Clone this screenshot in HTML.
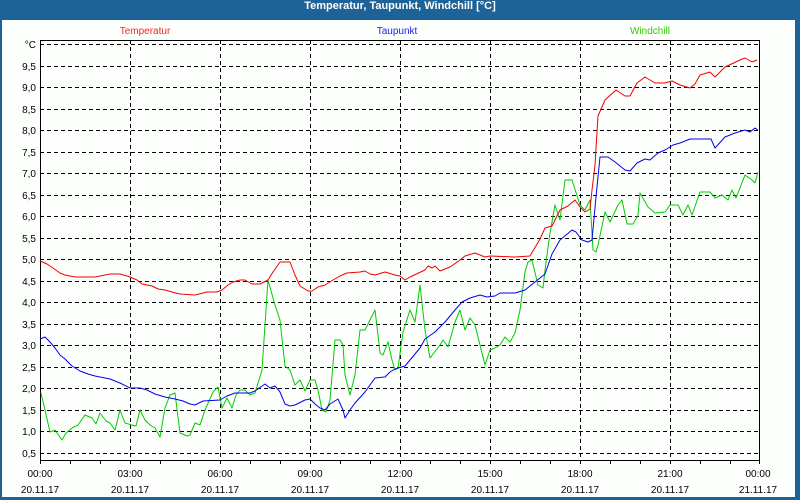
<!DOCTYPE html>
<html><head><meta charset="utf-8"><style>
html,body{margin:0;padding:0;width:800px;height:500px;overflow:hidden;background:#1e6397;}
#w{position:absolute;left:2px;top:20px;width:793px;height:477px;background:#fdfffd;}
#t{position:absolute;left:0;top:0;width:800px;height:20px;line-height:19px;text-align:center;color:#fff;font:bold 11px "Liberation Sans",sans-serif;}
svg{position:absolute;left:0;top:0}
text{font-family:"Liberation Sans",sans-serif;font-size:10px;fill:#000}
</style></head><body>
<div id="t">Temperatur, Taupunkt, Windchill [°C]</div>
<div id="w"></div>
<svg width="800" height="500" viewBox="0 0 800 500">
<g stroke="#000" stroke-width="1" stroke-dasharray="4,3" shape-rendering="crispEdges">
<line x1="40" x2="760" y1="44.5" y2="44.5"/><line x1="40" x2="760" y1="66.5" y2="66.5"/><line x1="40" x2="760" y1="87.5" y2="87.5"/><line x1="40" x2="760" y1="109.5" y2="109.5"/><line x1="40" x2="760" y1="130.5" y2="130.5"/><line x1="40" x2="760" y1="152.5" y2="152.5"/><line x1="40" x2="760" y1="173.5" y2="173.5"/><line x1="40" x2="760" y1="195.5" y2="195.5"/><line x1="40" x2="760" y1="216.5" y2="216.5"/><line x1="40" x2="760" y1="238.5" y2="238.5"/><line x1="40" x2="760" y1="259.5" y2="259.5"/><line x1="40" x2="760" y1="281.5" y2="281.5"/><line x1="40" x2="760" y1="302.5" y2="302.5"/><line x1="40" x2="760" y1="324.5" y2="324.5"/><line x1="40" x2="760" y1="345.5" y2="345.5"/><line x1="40" x2="760" y1="367.5" y2="367.5"/><line x1="40" x2="760" y1="388.5" y2="388.5"/><line x1="40" x2="760" y1="410.5" y2="410.5"/><line x1="40" x2="760" y1="431.5" y2="431.5"/><line x1="40" x2="760" y1="453.5" y2="453.5"/>
<line x1="130.5" x2="130.5" y1="40" y2="460"/><line x1="220.5" x2="220.5" y1="40" y2="460"/><line x1="310.5" x2="310.5" y1="40" y2="460"/><line x1="400.5" x2="400.5" y1="40" y2="460"/><line x1="490.5" x2="490.5" y1="40" y2="460"/><line x1="580.5" x2="580.5" y1="40" y2="460"/><line x1="670.5" x2="670.5" y1="40" y2="460"/>
</g>
<g stroke="#000" stroke-width="1" shape-rendering="crispEdges" fill="none">
<rect x="40.5" y="40.5" width="719" height="420"/>
<path d="M70.5 460v4M100.5 460v4M130.5 460v4M160.5 460v4M190.5 460v4M220.5 460v4M250.5 460v4M280.5 460v4M310.5 460v4M340.5 460v4M370.5 460v4M400.5 460v4M430.5 460v4M460.5 460v4M490.5 460v4M520.5 460v4M550.5 460v4M580.5 460v4M610.5 460v4M640.5 460v4M670.5 460v4M700.5 460v4M730.5 460v4M40.5 460v4M759.5 460v4"/>
</g>
<g fill="none" stroke-width="1" stroke-linejoin="round">
<polyline stroke="#00cc00" points="41,393 45,410 50,432 55,430 62,440 66,433 72,428 78,425 85,415 92,418 96,424 100,413 106,421 110,423 115,430 120,410 125,423 132,425 136,426 140,410 145,420 150,425 155,428 160,437 165,408 170,395 175,393 180,433 187,436 190,435 195,423 200,425 205,410 213,392 218,387 222,408 227,398 232,408 236,395 240,390 245,390 250,395 255,393 262,370 268,280 275,305 280,320 285,366 290,370 295,385 300,380 305,391 310,380 315,380 318,390 322,410 326,412 330,400 335,340 340,340 343,345 345,375 350,395 355,375 360,330 365,330 370,320 375,310 378,335 380,353 383,355 388,342 392,360 395,370 398,368 403,332 410,310 415,322 420,285 425,330 430,358 440,345 443,340 448,347 455,322 460,310 465,330 470,318 475,325 480,345 485,365 490,350 495,348 500,345 505,337 510,342 515,333 520,310 525,272 528,262 532,260 538,285 543,288 545,270 550,233 555,205 560,220 565,180 572,180 580,205 585,210 590,200 593,250 596,252 598,245 605,212 610,222 618,205 622,200 627,224 633,224 638,215 640,193 648,207 655,213 665,212 670,205 678,205 683,215 688,205 692,215 700,192 710,192 715,198 722,195 728,200 732,190 736,198 745,175 752,180 755,183 758,172"/>
<polyline stroke="#0000ee" points="40,339 45,337 50,342 55,348 60,355 65,359 72,366 80,371 88,374 95,376 100,377 110,379 120,383 130,388 140,388 147,390 155,394 165,397 175,399 183,401 190,404 195,405 203,401 220,400 227,396 235,393 250,393 255,391 265,384 270,388 275,386 280,392 285,404 290,406 295,405 305,400 310,399 315,404 320,408 325,410 330,404 338,399 343,410 345,418 350,410 355,403 365,392 370,385 375,378 385,377 390,372 395,369 405,366 410,360 420,348 425,339 435,332 445,322 455,310 462,302 470,298 480,295 487,297 495,296 500,293 515,293 525,290 535,282 545,274 552,254 560,240 572,230 576,232 582,240 588,242 592,240 596,197 600,157 608,157 615,162 625,170 630,171 637,163 645,159 650,160 658,153 665,150 673,145 680,143 690,139 711,139 715,148 725,137 735,133 745,130 750,132 755,128 758,130"/>
<polyline stroke="#ee0000" points="40,261 47,264 53,268 60,273 65,275 75,277 95,277 100,276 110,274 120,274 130,277 137,280 142,284 152,286 158,289 165,290 172,292 180,294 195,295 207,292 217,292 222,290 228,285 233,282 240,280 245,280 252,284 260,284 268,280 273,272 280,262 290,262 295,275 300,286 308,291 312,291 318,287 325,285 333,280 340,276 347,273 360,272 365,271 370,274 375,275 385,272 395,275 400,276 405,280 410,277 425,270 428,266 432,268 435,266 440,271 450,267 460,260 465,256 475,253 485,257 490,256 515,257 530,256 540,239 545,228 552,226 560,210 568,206 575,200 580,207 585,212 590,209 592,190 595,165 598,116 605,100 616,90 625,96 630,96 637,83 645,77 655,83 665,83 672,81 680,85 690,88 695,84 700,75 710,72 715,77 725,67 740,60 745,58 752,62 757,60"/>
</g>
<g text-anchor="end">
<text x="36" y="48">°C</text><text x="36" y="70">9,5</text><text x="36" y="91">9,0</text><text x="36" y="113">8,5</text><text x="36" y="134">8,0</text><text x="36" y="156">7,5</text><text x="36" y="177">7,0</text><text x="36" y="199">6,5</text><text x="36" y="220">6,0</text><text x="36" y="242">5,5</text><text x="36" y="263">5,0</text><text x="36" y="285">4,5</text><text x="36" y="306">4,0</text><text x="36" y="328">3,5</text><text x="36" y="349">3,0</text><text x="36" y="371">2,5</text><text x="36" y="392">2,0</text><text x="36" y="414">1,5</text><text x="36" y="435">1,0</text><text x="36" y="457">0,5</text>
</g>
<g text-anchor="middle">
<text x="40" y="477">00:00</text><text x="130" y="477">03:00</text><text x="220" y="477">06:00</text><text x="310" y="477">09:00</text><text x="400" y="477">12:00</text><text x="490" y="477">15:00</text><text x="580" y="477">18:00</text><text x="670" y="477">21:00</text><text x="758" y="477">00:00</text>
<text x="40" y="493">20.11.17</text><text x="130" y="493">20.11.17</text><text x="220" y="493">20.11.17</text><text x="310" y="493">20.11.17</text><text x="400" y="493">20.11.17</text><text x="490" y="493">20.11.17</text><text x="580" y="493">20.11.17</text><text x="670" y="493">20.11.17</text><text x="758" y="493">21.11.17</text>
<text x="145" y="34" style="fill:#ff2020">Temperatur</text>
<text x="397" y="34" style="fill:#2020ee">Taupunkt</text>
<text x="650" y="34" style="fill:#33cc00">Windchill</text>
</g>
</svg>
</body></html>
